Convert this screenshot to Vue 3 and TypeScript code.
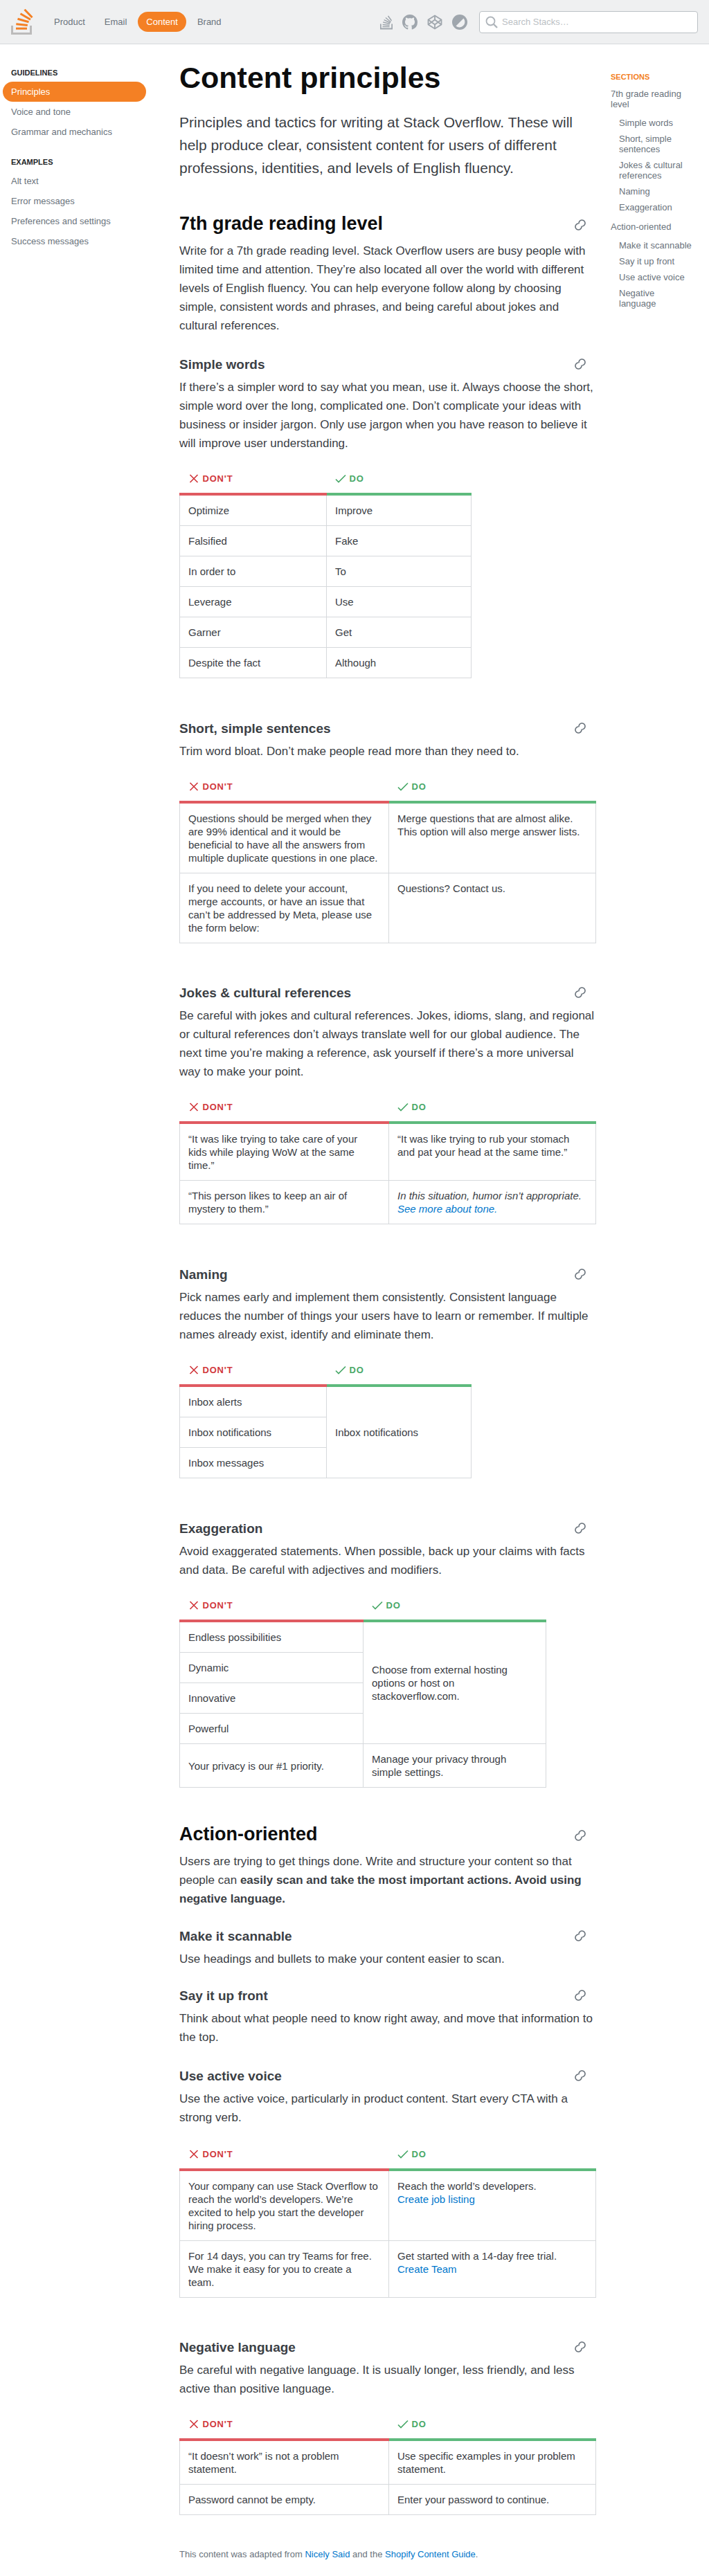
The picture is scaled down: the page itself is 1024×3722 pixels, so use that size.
<script setup lang="ts">
interface Cell { html: string; rowspan?: number }
interface Tbl { w: number; c1: number; top?: boolean; rows: Cell[][] }
const t = (rows: string[][]): Cell[][] => rows.map(r => r.map(html => ({ html })));
const guidelines = ['Voice and tone', 'Grammar and mechanics'];
const examples = ['Alt text', 'Error messages', 'Preferences and settings', 'Success messages'];
const toc1 = ['Simple words', 'Short, simple sentences', 'Jokes & cultural references', 'Naming', 'Exaggeration'];
const toc2 = ['Make it scannable', 'Say it up front', 'Use active voice', 'Negative language'];
const simple: Tbl = { w: 422, c1: 212, rows: t([['Optimize','Improve'],['Falsified','Fake'],['In order to','To'],['Leverage','Use'],['Garner','Get'],['Despite the fact','Although']]) };
const shortT: Tbl = { w: 602, c1: 302, top: true, rows: t([
 ['Questions should be merged when they are 99% identical and it would be beneficial to have all the answers from multiple duplicate questions in one place.','Merge questions that are almost alike. This option will also merge answer lists.'],
 ['If you need to delete your account, merge accounts, or have an issue that can’t be addressed by Meta, please use the form below:','Questions? Contact us.']]) };
const jokes: Tbl = { w: 602, c1: 302, top: true, rows: t([
 ['“It was like trying to take care of your kids while playing WoW at the same time.”','“It was like trying to rub your stomach and pat your head at the same time.”'],
 ['“This person likes to keep an air of mystery to them.”','<em>In this situation, humor isn’t appropriate. <a>See more about tone.</a></em>']]) };
const naming: Tbl = { w: 422, c1: 212, rows: [
 [{ html: 'Inbox alerts' }, { html: 'Inbox notifications', rowspan: 3 }],
 [{ html: 'Inbox notifications' }],
 [{ html: 'Inbox messages' }]] };
const exag: Tbl = { w: 530, c1: 265, rows: [
 [{ html: 'Endless possibilities' }, { html: 'Choose from external hosting options or host on stackoverflow.com.', rowspan: 4 }],
 [{ html: 'Dynamic' }],[{ html: 'Innovative' }],[{ html: 'Powerful' }],
 [{ html: 'Your privacy is our #1 priority.' }, { html: 'Manage your privacy through simple settings.' }]] };
const active: Tbl = { w: 602, c1: 302, top: true, rows: t([
 ['Your company can use Stack Overflow to reach the world’s developers. We’re excited to help you start the developer hiring process.','Reach the world’s developers.<br><a>Create job listing</a>'],
 ['For 14 days, you can try Teams for free. We make it easy for you to create a team.','Get started with a 14-day free trial.<br><a>Create Team</a>']]) };
const negative: Tbl = { w: 602, c1: 302, top: true, rows: t([
 ['“It doesn’t work” is not a problem statement.','Use specific examples in your problem statement.'],
 ['Password cannot be empty.','Enter your password to continue.']]) };
const sections = [
 { level: 2, title: '7th grade reading level', text: 'Write for a 7th grade reading level. Stack Overflow users are busy people with limited time and attention. They’re also located all over the world with different levels of English fluency. You can help everyone follow along by choosing simple, consistent words and phrases, and being careful about jokes and cultural references.', cls: 's7' },
 { level: 3, title: 'Simple words', text: 'If there’s a simpler word to say what you mean, use it. Always choose the short, simple word over the long, complicated one. Don’t complicate your ideas with business or insider jargon. Only use jargon when you have reason to believe it will improve user understanding.', table: simple, cls: 'sw' },
 { level: 3, title: 'Short, simple sentences', text: 'Trim word bloat. Don’t make people read more than they need to.', table: shortT, cls: 'tb' },
 { level: 3, title: 'Jokes & cultural references', text: 'Be careful with jokes and cultural references. Jokes, idioms, slang, and regional or cultural references don’t always translate well for our global audience. The next time you’re making a reference, ask yourself if there’s a more universal way to make your point.', table: jokes, cls: 'tb1' },
 { level: 3, title: 'Naming', text: 'Pick names early and implement them consistently. Consistent language reduces the number of things your users have to learn or remember. If multiple names already exist, identify and eliminate them.', table: naming, cls: 'tb' },
 { level: 3, title: 'Exaggeration', text: 'Avoid exaggerated statements. When possible, back up your claims with facts and data. Be careful with adjectives and modifiers.', table: exag, cls: 'tb' },
 { level: 2, title: 'Action-oriented', text: 'Users are trying to get things done. Write and structure your content so that people can <strong>easily scan and take the most important actions. Avoid using negative language.</strong>', cls: 'ao' },
 { level: 3, title: 'Make it scannable', text: 'Use headings and bullets to make your content easier to scan.', cls: 'mk' },
 { level: 3, title: 'Say it up front', text: 'Think about what people need to know right away, and move that information to the top.', cls: 'say' },
 { level: 3, title: 'Use active voice', text: 'Use the active voice, particularly in product content. Start every CTA with a strong verb.', table: active, cls: 'use' },
 { level: 3, title: 'Negative language', text: 'Be careful with negative language. It is usually longer, less friendly, and less active than positive language.', table: negative, cls: 'tb1' },
];
</script>

<template>
  <div class="page">
    <header class="top">
      <svg class="logo" width="32" height="38" viewBox="16 13 32 38">
        <path d="M17.500 37v11.500h27V37" fill="none" stroke="#bcbbbb" stroke-width="3"/>
        <g fill="none" stroke="#f48024" stroke-width="3">
          <path d="M23 41.200h16"/>
          <path d="M23.300 34.700l16.500 1.700"/>
          <path d="M25.500 27.300l16 4.500"/>
          <path d="M29.500 19.800l14.500 8.500"/>
          <path d="M35.500 13.800l11 11.500"/>
        </g>
      </svg>
      <nav class="mainnav">
        <a>Product</a><a>Email</a><a class="on">Content</a><a>Brand</a>
      </nav>
      <div class="tools">
        <svg width="18" height="22" viewBox="0 0 18 22" fill="none" stroke="#9fa6ad" stroke-width="1.500"><path d="M.8 13.500v7h16.400v-7" stroke-width="1.800"/><path d="M3.500 17.500h10M3.600 14.500l10 1M4.200 11l9.800 2.500M5.600 7.600l9 4.400M8 4.500l7.500 6.500M11.500 2l5 7"/></svg>
        <svg width="22" height="22" viewBox="0 0 16 16" fill="#9fa6ad"><path d="M8 0C3.580 0 0 3.580 0 8c0 3.540 2.290 6.530 5.470 7.590.4.070.55-.17.55-.38 0-.19-.01-.82-.01-1.490-2.010.37-2.530-.49-2.690-.94-.09-.23-.48-.94-.82-1.130-.28-.15-.68-.52-.01-.53.630-.01 1.080.58 1.230.82.720 1.210 1.870.87 2.330.66.070-.52.280-.87.510-1.070-1.780-.2-3.640-.89-3.640-3.950 0-.87.310-1.590.82-2.150-.08-.2-.36-1.020.08-2.120 0 0 .67-.21 2.200.82.640-.18 1.320-.27 2-.27s1.360.09 2 .27c1.530-1.040 2.200-.82 2.200-.82.44 1.100.16 1.920.08 2.120.51.560.82 1.270.82 2.150 0 3.070-1.870 3.750-3.650 3.950.29.250.54.730.54 1.480 0 1.070-.01 1.930-.01 2.200 0 .21.150.46.550.38A8.010 8.010 0 0 0 16 8c0-4.420-3.580-8-8-8z"/></svg>
        <svg width="22" height="22" viewBox="0 0 22 22" fill="none" stroke="#9fa6ad" stroke-width="1.800" stroke-linejoin="round"><path d="M11 1.500l9.500 6v7l-9.500 6-9.500-6v-7z"/><path d="M11 1.500v6M11 14.500v6M1.500 7.500l9.500 7 9.500-7M1.500 14.500l9.500-7 9.500 7"/></svg>
        <svg width="22" height="22" viewBox="0 0 22 22"><circle cx="11" cy="11" r="11" fill="#9fa6ad"/><path d="M5.500 16.500L16.500 5.500a7.800 7.800 0 0 1-11 11z" fill="#eff0f1"/></svg>
      </div>
      <div class="search">
        <svg width="18" height="18" viewBox="0 0 18 18" fill="none" stroke="#aeb4ba" stroke-width="1.800"><circle cx="7.500" cy="7.500" r="6"/><path d="M12 12l5 5" stroke-width="2.400"/></svg>
        <span>Search Stacks…</span>
      </div>
    </header>
    <div class="body">
      <aside class="left">
        <h4 class="lh first">Guidelines</h4>
        <a class="litem act">Principles</a>
        <a v-for="g in guidelines" :key="g" class="litem">{{ g }}</a>
        <h4 class="lh second">Examples</h4>
        <a v-for="g in examples" :key="g" class="litem">{{ g }}</a>
      </aside>
      <main class="main">
        <h1>Content principles</h1>
        <p class="intro">Principles and tactics for writing at Stack Overflow. These will help produce clear, consistent content for users of different professions, identities, and levels of English fluency.</p>
        <section v-for="s in sections" :key="s.title" :class="['sec', s.cls]">
          <div :class="s.level === 2 ? 'h2row' : 'h3row'">
            <component :is="s.level === 2 ? 'h2' : 'h3'">{{ s.title }}</component>
            <svg class="link" width="16" height="16" viewBox="0 0 16 16" fill="none" stroke="#6a737c" stroke-width="1.600"><path d="M6.100 6.400A4.500 4.500 0 1 1 10.900 10"/><path d="M9.900 9.600A4.500 4.500 0 1 1 5.100 6"/></svg>
          </div>
          <p class="txt" v-html="s.text"></p>
          <table v-if="s.table" :class="['dd', { 'top-cells': s.table.top }]" :style="{ width: s.table.w + 'px' }">
            <colgroup><col :style="{ width: s.table.c1 + 'px' }"><col></colgroup>
            <thead>
              <tr>
                <th class="no"><svg width="16" height="13" viewBox="0 0 16 13" fill="none" stroke="#d1383d" stroke-width="1.700"><path d="M2.500 1l11 11M13.500 1l-11 11"/></svg>DON'T</th>
                <th class="yes"><svg width="16" height="13" viewBox="0 0 16 13" fill="none" stroke="#48a868" stroke-width="1.700"><path d="M1 7.500l4 4L15 1.500"/></svg>DO</th>
              </tr>
            </thead>
            <tbody>
              <tr v-for="(r, i) in s.table.rows" :key="i">
                <td v-for="(c, j) in r" :key="j" :rowspan="c.rowspan || 1" v-html="c.html"></td>
              </tr>
            </tbody>
          </table>
        </section>
        <p class="foot">This content was adapted from <a>Nicely Said</a> and the <a>Shopify Content Guide</a>.</p>
      </main>
      <aside class="right">
        <h4 class="rh">Sections</h4>
        <a class="r1">7th grade reading level</a>
        <a v-for="x in toc1" :key="x" class="r2">{{ x }}</a>
        <a class="r1 r1b">Action-oriented</a>
        <a v-for="x in toc2" :key="x" class="r2">{{ x }}</a>
      </aside>
    </div>
  </div>
</template>

<style>
html, body { margin: 0; background: #fff; }
</style>
<style scoped>
.page { width: 1024px; font-family: "Liberation Sans", Arial, sans-serif; color: #3b4045; }
.top { height: 63px; box-sizing: content-box; border-bottom: 1px solid #d6d9dc; background: #eff0f1; display: flex; align-items: center; padding: 0 16px; }
.logo { flex: none; margin-top: 1px; }
.mainnav { display: flex; margin-left: 18px; font-size: 13px; color: #6a737c; }
.mainnav a { padding: 0 12px; height: 29px; line-height: 29px; border-radius: 14.500px; margin-right: 4px; }
.mainnav a.on { background: #f48024; color: #fff; }
.tools { margin-left: auto; display: flex; align-items: center; gap: 14px; margin-right: 17px; }
.search { width: 316px; height: 32px; border: 1px solid #bbc0c4; border-radius: 4px; background: #fff; display: flex; align-items: center; gap: 6px; padding-left: 8px; box-sizing: border-box; font-size: 13px; color: #bbc0c4; }
.body { display: flex; }
.left { width: 207px; flex: none; padding-top: 34px; padding-left: 4px; }
.lh { margin: 0; font-size: 11px; line-height: 14px; font-weight: 700; text-transform: uppercase; color: #242729; padding-left: 12px; }
.lh.first { margin-bottom: 6px; }
.lh.second { margin-top: 22px; margin-bottom: 6px; }
.litem { display: block; height: 29px; line-height: 29px; font-size: 13px; color: #6a737c; padding-left: 12px; border-radius: 15px; }
.litem.act { background: #f48024; color: #fff; }
.main { width: 602px; flex: none; margin-left: 48px; padding-top: 20px; }
h1 { margin: 0; font-size: 43px; line-height: 56px; font-weight: 700; color: #0c0d0e; }
.intro { margin: 20px 0 0; width: 600px; font-size: 21px; line-height: 33px; color: #3b4045; }
.h2row, .h3row { display: flex; align-items: flex-start; justify-content: space-between; padding-right: 15px; }
h2 { margin: 0; font-size: 27px; line-height: 35px; color: #0c0d0e; font-weight: 700; }
h3 { margin: 0; font-size: 19px; line-height: 25px; color: #3b4045; font-weight: 700; }
.h2row .link { margin-top: 11px; }
.h3row .link { margin-top: 4px; }
.link { flex: none; }
.txt { margin: 8px 0 0; width: 600px; font-size: 17px; line-height: 27px; }
.h3row + .txt { margin-top: 7px; }
.sec.s7 { margin-top: 47px; }
.sec.sw { margin-top: 30px; }
.sec.tb { margin-top: 60px; }
.sec.tb1 { margin-top: 59px; }
.sec.ao { margin-top: 50px; }
.sec.mk { margin-top: 28px; }
.sec.say { margin-top: 27px; }
.sec.use { margin-top: 30px; }
.sec.use .dd { margin-top: 22px; }
.dd { border-collapse: collapse; table-layout: fixed; margin-top: 20px; font-size: 15px; line-height: 19px; }
.dd th { text-align: left; font-size: 13px; line-height: 16px; font-weight: 700; letter-spacing: .8px; padding: 10px 12px 12px; }
.dd th svg { margin-right: 5px; vertical-align: -2px; }
.dd th.no { color: #d1383d; border-bottom: 4px solid #e05a61; }
.dd th.yes { color: #48a868; border-bottom: 4px solid #5eba7d; }
.dd td { border: 1px solid #d6d9dc; padding: 12px 15px 12px 12px; vertical-align: middle; color: #3b4045; }
.dd.top-cells td { vertical-align: top; }
.dd td :deep(a) { color: #0077cc; }
.foot { margin: 47px 0 0; font-size: 13px; line-height: 19px; color: #6a737c; }
.foot a { color: #0077cc; }
.right { width: 120px; margin-left: 21px; padding-top: 40px; flex: none; font-size: 13px; color: #6a737c; }
.rh { margin: 0 0 10px; font-size: 11px; line-height: 14px; font-weight: 700; text-transform: uppercase; color: #f48024; }
.r1 { display: block; line-height: 15px; margin-bottom: 12px; }
.r1b { margin-top: 13px; }
.r2 { display: block; margin: 0 0 8px 12px; line-height: 15px; }
</style>
